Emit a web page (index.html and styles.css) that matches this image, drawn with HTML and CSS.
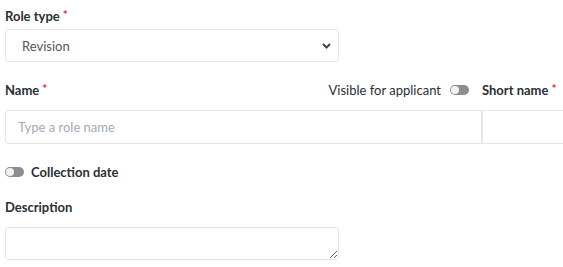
FILE: index.html
```html
<!DOCTYPE html>
<html>
<head>
<meta charset="utf-8">
<link rel="stylesheet" href="styles.css">
</head>
<body>
<div class="form">
  <div class="field">
    <label class="label">Role type<span class="req">*</span></label>
    <div class="select-wrap">
      <select class="select">
        <option>Revision</option>
      </select>
      <svg class="chev" width="9" height="6" viewBox="0 0 9 6"><path d="M1 1 L4.5 4.5 L8 1" fill="none" stroke="#444" stroke-width="2"/></svg>
    </div>
  </div>

  <div class="row">
    <div class="col-name">
      <div class="label-row">
        <label class="label">Name<span class="req">*</span></label>
        <div class="visible">
          <span class="visible-text">Visible for applicant</span>
          <span class="toggle"><span class="knob"></span></span>
        </div>
      </div>
      <input class="input input-name" placeholder="Type a role name">
    </div>
    <div class="col-short">
      <div class="label-row">
        <label class="label">Short name<span class="req">*</span></label>
      </div>
      <input class="input input-short">
    </div>
  </div>

  <div class="switch-row">
    <span class="toggle"><span class="knob"></span></span>
    <span class="switch-label">Collection date</span>
  </div>

  <div class="field desc">
    <label class="label">Description</label>
    <textarea class="textarea"></textarea>
  </div>
</div>
</body>
</html>
```

FILE: styles.css
```css
html, body {
  margin: 0;
  padding: 0;
  background: #fff;
  overflow: hidden;
}
body {
  font-family: Lato, "Noto Sans", sans-serif;
  color: #2b2f33;
  width: 563px;
  height: 267px;
}
.form {
  padding: 8px 0 0 5px;
  display: flex;
  flex-direction: column;
}
.field {
  display: flex;
  flex-direction: column;
}
.label {
  font-size: 13px;
  font-weight: 700;
  line-height: 16px;
  color: #2b2f33;
}
.req {
  color: #e8262d;
  margin-left: 3px;
  font-size: 12px;
  vertical-align: top;
  position: relative;
  top: -1px;
}
.select-wrap {
  position: relative;
  width: 334px;
  margin-top: 5px;
}
.select {
  appearance: none;
  -webkit-appearance: none;
  width: 334px;
  height: 33px;
  box-sizing: border-box;
  border: 1px solid #e6e6e6;
  border-radius: 3px;
  background: #fff;
  font-family: Lato, sans-serif;
  font-size: 13px;
  color: #555;
  padding: 0 0 0 16px;
  outline: none;
}
.chev {
  position: absolute;
  right: 8px;
  top: 14px;
}
.row {
  display: flex;
  margin-top: 20px;
}
.col-name {
  width: 477px;
  flex: none;
  display: flex;
  flex-direction: column;
}
.col-short {
  flex: 1;
  min-width: 0;
  display: flex;
  flex-direction: column;
}
.label-row {
  display: flex;
  align-items: center;
  justify-content: space-between;
  height: 16px;
}
.visible {
  display: flex;
  align-items: center;
  margin-right: 13px;
}
.visible-text {
  font-size: 13px;
  color: #2b2f33;
  margin-right: 9px;
}
.toggle {
  display: inline-block;
  position: relative;
  width: 19px;
  height: 10px;
  border-radius: 5px;
  background: #8e8e8e;
}
.knob {
  position: absolute;
  left: 1px;
  top: 1px;
  width: 8px;
  height: 8px;
  border-radius: 50%;
  background: #f2f2f2;
}
.input {
  box-sizing: border-box;
  height: 34px;
  margin-top: 12px;
  border: 1px solid #e6e6e6;
  background: #fff;
  font-family: Lato, sans-serif;
  font-size: 13px;
  padding: 0 12px;
  outline: none;
}
.input::placeholder {
  color: #a3abb5;
}
.input-name {
  width: 477px;
  border-radius: 3px 0 0 3px;
}
.input-short {
  width: 100%;
  border-right: none;
  border-radius: 0;
}
.switch-row {
  display: flex;
  align-items: center;
  margin-top: 20px;
  height: 16px;
}
.switch-label {
  font-size: 13px;
  font-weight: 700;
  margin-left: 7px;
}
.desc {
  margin-top: 19px;
}
.textarea {
  width: 334px;
  height: 33px;
  box-sizing: border-box;
  margin-top: 12px;
  border: 1px solid #e6e6e6;
  border-radius: 3px;
  resize: both;
  outline: none;
  font-family: Lato, sans-serif;
}
```
